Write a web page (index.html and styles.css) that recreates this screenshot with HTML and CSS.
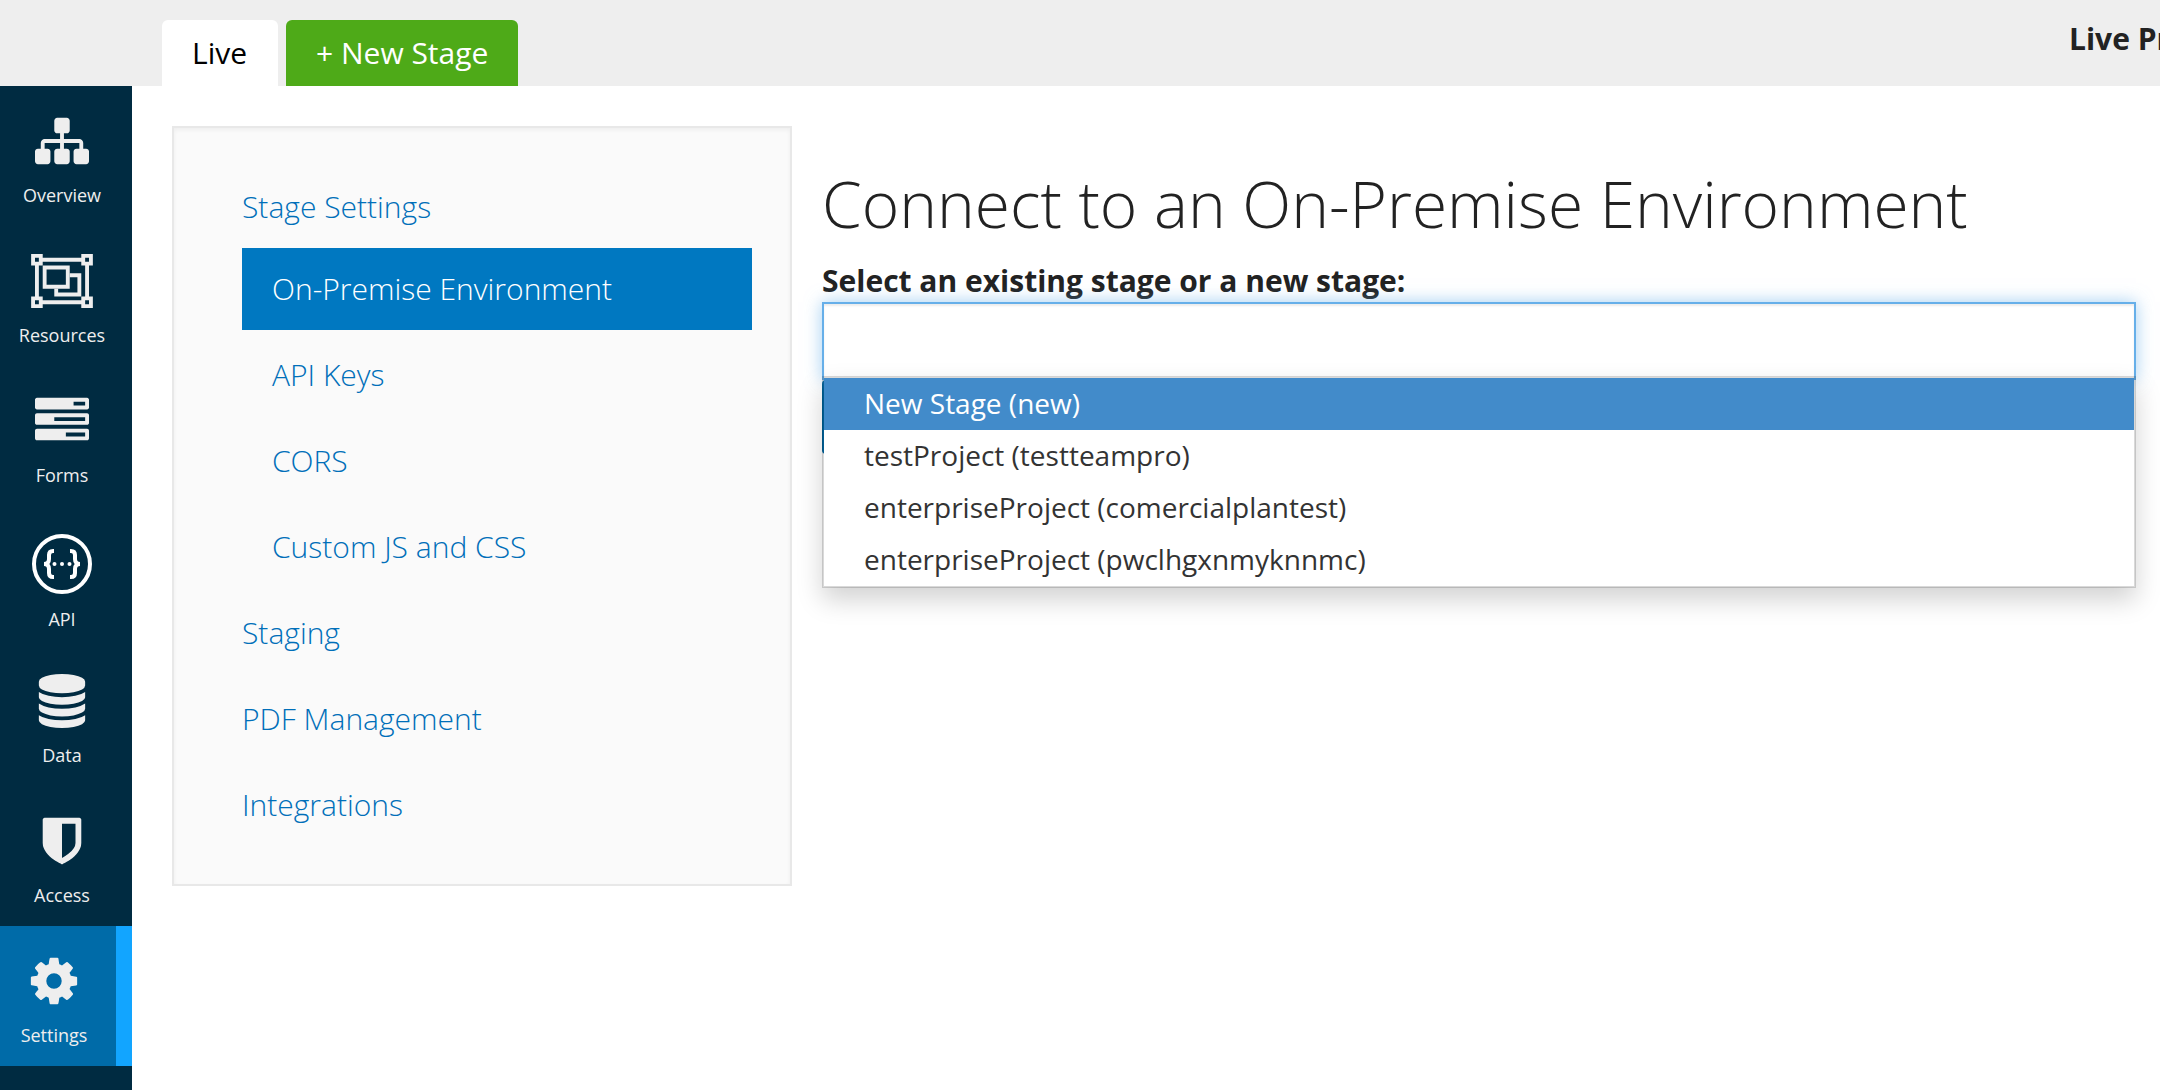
FILE: index.html
```html
<!DOCTYPE html>
<html lang="en">
<head>
<meta charset="utf-8">
<meta name="viewport" content="width=device-width, initial-scale=1">
<title>Connect to an On-Premise Environment</title>
<link rel="stylesheet" href="styles.css">
</head>
<body>
<header class="topbar">
  <nav class="tabs" aria-label="Stages">
    <a class="tab" href="#live">Live</a>
    <button class="tab tab-new" type="button">+ New Stage</button>
  </nav>
  <strong class="project-state">Live Pr</strong>
</header>
<div class="shell">
  <nav class="rail" aria-label="Project">
    <a class="rail-item" href="#overview">
      <svg class="rail-icon" viewBox="0 0 1792 1792" aria-hidden="true"><path d="M1792 1248v320q0 40-28 68t-68 28h-320q-40 0-68-28t-28-68v-320q0-40 28-68t68-28h96v-192h-512v192h96q40 0 68 28t28 68v320q0 40-28 68t-68 28h-320q-40 0-68-28t-28-68v-320q0-40 28-68t68-28h96v-192h-512v192h96q40 0 68 28t28 68v320q0 40-28 68t-68 28h-320q-40 0-68-28t-28-68v-320q0-40 28-68t68-28h96v-192q0-52 38-90t90-38h512v-192h-96q-40 0-68-28t-28-68v-320q0-40 28-68t68-28h320q40 0 68 28t28 68v320q0 40-28 68t-68 28h-96v192h512q52 0 90 38t38 90v192h96q40 0 68 28t28 68z"/></svg>
      <span>Overview</span>
    </a>
    <a class="rail-item" href="#resources">
      <svg class="rail-icon rail-icon-wide" viewBox="0 0 2048 1792" aria-hidden="true"><path d="M2048 384h-128v1024h128v384h-384v-128h-1280v128h-384v-384h128v-1024h-128v-384h384v128h1280v-128h384v384zm-256-256v128h128v-128h-128zm-1664 0v128h128v-128h-128zm128 1536v-128h-128v128h128zm1408-128v-128h128v-1024h-128v-128h-1280v128h-128v1024h128v128h1280zm256 128v-128h-128v128h128z"/><path d="M384 384H1280V1152H384zM512 512V1024H1152V512z"/><path d="M1280 640H1664V1408H768V1152H896V1280H1536V768H1280z"/></svg>
      <span>Resources</span>
    </a>
    <a class="rail-item" href="#forms">
      <svg class="rail-icon" viewBox="0 0 1792 1792" aria-hidden="true"><path d="M1024 1408h640v-128h-640v128zm-384-512h1024v-128h-1024v128zm640-512h384v-128h-384v128zm512 832v256q0 26-19 45t-45 19h-1664q-26 0-45-19t-19-45v-256q0-26 19-45t45-19h1664q26 0 45 19t19 45zm0-512v256q0 26-19 45t-45 19h-1664q-26 0-45-19t-19-45v-256q0-26 19-45t45-19h1664q26 0 45 19t19 45zm0-512v256q0 26-19 45t-45 19h-1664q-26 0-45-19t-19-45v-256q0-26 19-45t45-19h1664q26 0 45 19t19 45z"/></svg>
      <span>Forms</span>
    </a>
    <a class="rail-item" href="#api">
      <svg class="rail-icon rail-icon-round" viewBox="0 0 60 58" aria-hidden="true">
        <circle class="line" cx="30" cy="30" r="28"/>
        <path class="line" d="M22 17h-1q-4 0-4 4v4q0 5-5 5q5 0 5 5v4q0 4 4 4h1M38 17h1q4 0 4 4v4q0 5 5 5q-5 0-5 5v4q0 4-4 4h-1"/>
        <circle cx="22.500" cy="30" r="2"/><circle cx="30" cy="30" r="2"/><circle cx="37.500" cy="30" r="2"/>
      </svg>
      <span>API</span>
    </a>
    <a class="rail-item" href="#data">
      <svg class="rail-icon" viewBox="0 0 1792 1792" aria-hidden="true"><path d="M896 768q237 0 443-43t325-127v170q0 69-103 128t-280 93.5-385 34.5-385-34.5-280-93.5-103-128v-170q119 84 325 127t443 43zm0 768q237 0 443-43t325-127v170q0 69-103 128t-280 93.5-385 34.5-385-34.5-280-93.5-103-128v-170q119 84 325 127t443 43zm0-384q237 0 443-43t325-127v170q0 69-103 128t-280 93.5-385 34.5-385-34.5-280-93.5-103-128v-170q119 84 325 127t443 43zm0-1152q208 0 385 34.500t280 93.500 103 128v128q0 69-103 128t-280 93.500-385 34.500-385-34.500-280-93.500-103-128v-128q0-69 103-128t280-93.500 385-34.500z"/></svg>
      <span>Data</span>
    </a>
    <a class="rail-item" href="#access">
      <svg class="rail-icon" viewBox="0 0 1792 1792" aria-hidden="true"><path d="M1344 960v-640h-448v1137q119-63 213-137 235-184 235-360zm192-768v768q0 86-33.500 170.500t-83 150-118 127.500-126.500 103-121 77.500-89.500 49.500-42.500 20q-12 6-26 6t-26-6q-16-7-42.500-20t-89.500-49.500-121-77.500-126.500-103-118-127.500-83-150-33.500-170.500v-768q0-26 19-45t45-19h1152q26 0 45 19t19 45z"/></svg>
      <span>Access</span>
    </a>
    <a class="rail-item rail-item-active" href="#settings" aria-current="page">
      <svg class="rail-icon" viewBox="0 0 1792 1792" aria-hidden="true"><path d="M1152 896q0-106-75-181t-181-75-181 75-75 181 75 181 181 75 181-75 75-181zm512-109v222q0 12-8 23t-20 13l-185 28q-19 54-39 91 35 50 107 138 10 12 10 25t-9 23q-27 37-99 108t-94 71q-12 0-26-9l-138-108q-44 23-91 38-16 136-29 186-7 28-36 28h-222q-14 0-24.500-8.500t-11.500-21.500l-28-184q-49-16-90-37l-141 107q-10 9-25 9-14 0-25-11-126-114-165-168-7-10-7-23 0-12 8-23 15-21 51-66.500t54-70.500q-27-50-41-99l-183-27q-13-2-21-12.500t-8-23.500v-222q0-12 8-23t19-13l186-28q14-46 39-92-40-57-107-138-10-12-10-24 0-10 9-23 26-36 98.500-107.500t94.500-71.500q13 0 26 10l138 107q44-23 91-38 16-136 29-186 7-28 36-28h222q14 0 24.500 8.500t11.500 21.500l28 184q49 16 90 37l142-107q9-9 24-9 13 0 25 10 129 119 165 170 7 8 7 22 0 12-8 23-15 21-51 66.500t-54 70.500q26 50 41 98l183 28q13 2 21 12.500t8 23.500z"/></svg>
      <span>Settings</span>
    </a>
  </nav>
  <div class="content">
    <aside class="panel">
      <ul class="menu">
        <li><a class="menu-link" href="#stage-settings">Stage Settings</a></li>
        <li><a class="menu-link menu-sub menu-active" href="#on-premise" aria-current="page">On-Premise Environment</a></li>
        <li><a class="menu-link menu-sub" href="#keys">API Keys</a></li>
        <li><a class="menu-link menu-sub" href="#cors">CORS</a></li>
        <li><a class="menu-link menu-sub" href="#custom">Custom JS and CSS</a></li>
        <li><a class="menu-link" href="#staging">Staging</a></li>
        <li><a class="menu-link" href="#pdf">PDF Management</a></li>
        <li><a class="menu-link" href="#integrations">Integrations</a></li>
      </ul>
    </aside>
    <main class="main">
      <h1 class="title">Connect to an On-Premise Environment</h1>
      <form class="form">
        <label class="label" for="stage">Select an existing stage or a new stage:</label>
        <div class="combo">
          <input class="field" id="stage" type="text" role="combobox" aria-expanded="true" aria-controls="stages" autocomplete="off">
          <ul class="options" id="stages" role="listbox">
            <li class="option option-active" role="option" aria-selected="true">New Stage (new)</li>
            <li class="option" role="option">testProject (testteampro)</li>
            <li class="option" role="option">enterpriseProject (comercialplantest)</li>
            <li class="option" role="option">enterpriseProject (pwclhgxnmyknnmc)</li>
          </ul>
        </div>
        <button class="submit" type="button" aria-label="Connect"></button>
      </form>
    </main>
  </div>
</div>
</body>
</html>
```
FILE: styles.css
```css
* { box-sizing: border-box; }

body {
  margin: 0;
  min-height: 100vh;
  display: flex;
  flex-direction: column;
  overflow-x: hidden;
  background: #fff;
  color: #222;
  font-family: "Open Sans", sans-serif;
  font-size: 30px;
  line-height: 42px;
}

a { text-decoration: none; }
ul { list-style: none; margin: 0; padding: 0; }
button, input { font: inherit; }

.topbar {
  display: flex;
  justify-content: space-between;
  height: 86px;
  padding-left: 162px;
  background: #eee;
}

.tabs { display: flex; align-items: flex-end; gap: 8px; }

.tab {
  min-width: 116px;
  height: 66px;
  padding: 12px 30px;
  border: 0;
  border-radius: 6px 6px 0 0;
  background: #fff;
  color: #000;
}

.tab-new { background: #4eaa18; color: #fff; }

.project-state {
  width: 91px;
  padding-top: 18px;
  white-space: nowrap;
  overflow: hidden;
  font-weight: 700;
}

.shell { flex: 1; display: flex; }

.rail {
  flex: 0 0 132px;
  background: #002b41;
}

.rail-item {
  display: flex;
  flex-direction: column;
  align-items: center;
  gap: 15px;
  height: 140px;
  padding: 28px 8px 0 0;
  color: #eee;
  font-size: 18px;
  font-weight: 500;
  line-height: 24px;
}

.rail-item-active { background: #006ba8; border-right: 16px solid #12a5ff; }

.rail-icon { flex: none; width: 54px; height: 54px; fill: currentColor; overflow: visible; }
.rail-icon-wide { width: 62px; }
.rail-icon-round { width: 60px; height: 58px; fill: #fff; }
.line { fill: none; stroke: #fff; stroke-width: 4; }

.content {
  flex: 1;
  min-width: 0;
  display: flex;
  align-items: flex-start;
  gap: 30px;
  padding: 40px 24px 24px 40px;
}

.panel {
  flex: 0 0 620px;
  padding: 34px 38px 38px 68px;
  border: 2px solid #e8e8e8;
  background: #fafafa;
  box-shadow: inset 0 2px 4px rgba(0, 0, 0, .05);
}

.menu-link {
  display: block;
  padding: 24px 0 20px;
  color: #006fb9;
  font-weight: 300;
}

.menu-sub { padding-left: 30px; }

.menu-active {
  padding-top: 20px;
  background: #0078c1;
  color: #fff;
}

.main { flex: 1; min-width: 0; padding-top: 38px; }

.title {
  margin: 0 0 16px;
  font-size: 64px;
  font-weight: 300;
  line-height: 80px;
}

.form { display: flex; flex-direction: column; align-items: flex-start; }
.label { font-weight: 700; }
.combo { position: relative; align-self: stretch; }

.field {
  display: block;
  width: 100%;
  height: 78px;
  padding: 12px 24px;
  border: 2px solid #66afe9;
  border-radius: 0;
  outline: 0;
  background: #fff;
  box-shadow: inset 0 2px 2px rgba(0, 0, 0, .075), 0 0 16px rgba(102, 175, 233, .6);
}

.options {
  position: absolute;
  top: 74px;
  left: 0;
  right: 0;
  z-index: 1;
  border: 2px solid rgba(0, 0, 0, .15);
  background: #fff;
  background-clip: padding-box;
  box-shadow: 0 12px 24px rgba(0, 0, 0, .175);
}

.option {
  height: 52px;
  padding: 4px 40px;
  color: #333;
  font-size: 28px;
}

.option-active { background: #428bca; color: #fff; }

.submit {
  width: 160px;
  height: 74px;
  border: 0;
  border-radius: 4px;
  background: #006ba8;
}
```
